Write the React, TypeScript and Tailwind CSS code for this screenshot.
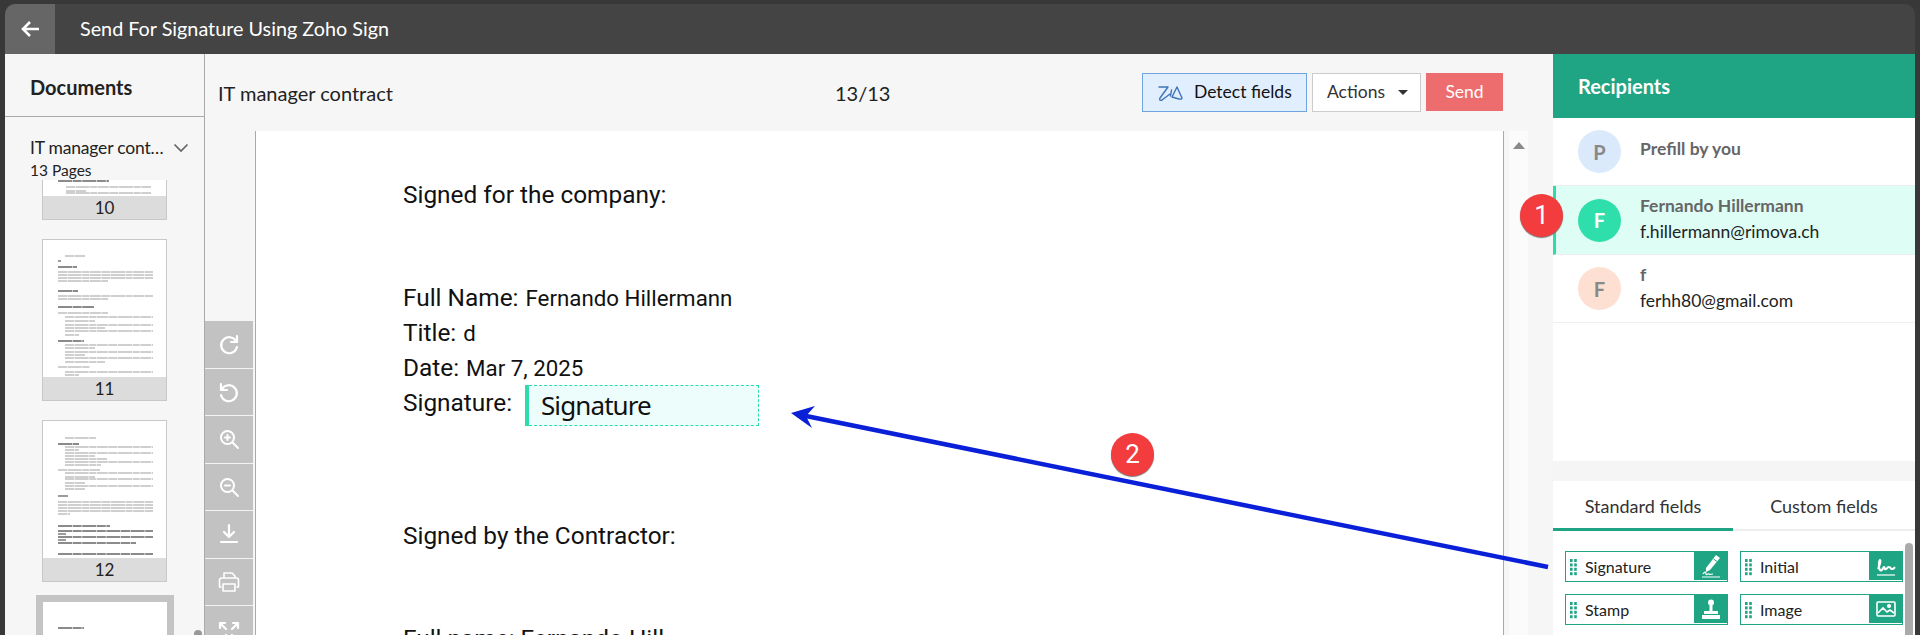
import React from "react";

const lato = "font-['Lato','Noto_Sans',sans-serif]";

type L = [number, number, number, number?];

const thumb10: L[] = [[15, 1, 51, 1], [23, 7, 85], [23, 11, 20], [23, 13, 85]];
const thumb11: L[] = [
  [22, 16, 20], [15, 21, 3, 1], [15, 27, 19, 1],
  [15, 32, 95], [15, 35, 95], [15, 38, 95], [15, 41, 50],
  [15, 51, 20, 1], [15, 56, 95], [15, 59, 50],
  [15, 67, 36, 1], [15, 73, 50],
  [22, 77, 88], [22, 81, 30], [22, 85, 88], [22, 88, 40], [22, 91, 88], [22, 95, 14],
  [15, 101, 26, 1], [22, 105, 88], [22, 108, 30], [22, 112, 88], [22, 115, 20], [22, 118, 88], [22, 122, 40],
  [15, 127, 32], [22, 132, 88], [22, 135, 14], [22, 139, 88],
];
const thumb12: L[] = [
  [22, 17, 31], [15, 23, 21, 1],
  [22, 26, 88], [22, 29, 14], [22, 32, 88], [22, 35, 30], [22, 38, 42], [22, 41, 88], [22, 44, 36],
  [15, 49, 42], [22, 52, 88], [22, 56, 30], [22, 58, 88], [22, 62, 20], [22, 65, 88], [22, 68, 20],
  [15, 75, 10, 1], [15, 81, 95], [15, 84, 95], [15, 87, 95], [15, 90, 95], [15, 93, 12],
  [15, 105, 52, 1], [15, 110, 95, 1], [15, 113, 8, 1], [15, 116, 95, 1], [15, 119, 8, 1], [15, 122, 78, 1],
  [15, 133, 95, 1],
];

function Lines({ lines, h }: { lines: L[]; h: number }) {
  return (
    <svg width="123" height={h} viewBox={`0 0 123 ${h}`} className="block blur-[0.3px]">
      {lines.map(([x, y, w, b], i) => (
        <line
          key={i}
          x1={x}
          x2={x + w}
          y1={y}
          y2={y}
          strokeWidth={b ? 1.3 : 1.2}
          stroke={b ? "#666" : "#a0a0a0"}
          strokeDasharray={b ? "14 0.6 9 0.6" : "9 0.6 14 0.6 7 0.6 11 0.6"}
        />
      ))}
    </svg>
  );
}

function Thumb({ n, lines, h, clip }: { n: string; lines: L[]; h: number; clip?: boolean }) {
  return (
    <div className={`ml-[42px] w-[125px] bg-white border border-[#c8c8c8] ${clip ? "border-t-0" : ""} mb-[19px]`}>
      <Lines lines={lines} h={h} />
      <div className="h-[23px] bg-[#dcdcdc] text-center text-[17px] leading-[24px] text-[#222]">{n}</div>
    </div>
  );
}

function ToolButton({ children }: { children: React.ReactNode }) {
  return (
    <div className="h-[47.5px] flex items-center justify-center text-white bg-[#c2c2c2] border-b border-[#f3f3f3]">
      {children}
    </div>
  );
}

const ic = { width: 24, height: 24, viewBox: "0 0 24 24", fill: "none", stroke: "#fff", strokeWidth: 2.2, strokeLinecap: "round" as const, strokeLinejoin: "round" as const };

function Recipient({ letter, avatar, name, email, active, text }: { letter: string; avatar: string; name: string; email?: string; active?: boolean; text: string }) {
  return (
    <div className={`flex items-center border-b border-[#eeeeee] ${active ? "h-[69px] bg-[#ddfdf5] border-l-[3px] border-l-[#2edbab] pl-[22px]" : "h-[68px] pl-[25px]"}`}>
      <div className={`w-[43px] h-[43px] rounded-full flex items-center justify-center text-[20px] font-bold ${avatar} ${text}`}>{letter}</div>
      <div className={`ml-[19px] ${email ? "-mt-[2px]" : "-mt-[5px]"}`}>
        <div className="text-[17.5px] leading-[26px] font-bold text-[#666666]">{name}</div>
        {email && <div className="text-[17.5px] leading-[26px] text-[#222222]">{email}</div>}
      </div>
    </div>
  );
}

function Grip() {
  return (
    <svg width="7" height="17" viewBox="0 0 7 17" className="shrink-0">
      {[0, 1].map((c) => [0, 1, 2, 3].map((r) => <rect key={`${c}${r}`} x={c * 4.2} y={r * 4.4} width="2.6" height="3" fill="#1fa583" />))}
    </svg>
  );
}

function Field({ label, icon }: { label: string; icon: React.ReactNode }) {
  return (
    <div className="w-[163px] h-[31px] border border-[#1fa583] flex items-start">
      <div className="ml-[4px] mt-[7px]"><Grip /></div>
      <span className="ml-[8px] text-[16px] leading-[30px] text-[#222] flex-1">{label}</span>
      <div className="w-[33px] h-[28px] bg-[#1fa583] flex items-center justify-center">{icon}</div>
    </div>
  );
}

export default function App() {
  return (
    <div className={`relative w-[1920px] h-[635px] overflow-hidden bg-[#383838] pt-[4px] pl-[5px] pr-[5px] ${lato}`}>
      <header className="h-[50px] bg-[#444444] rounded-t-[10px] flex items-center overflow-hidden">
        <div className="w-[50px] h-full bg-[#666666] flex items-center justify-center">
          <svg width="20" height="18" viewBox="0 0 20 18" fill="none" stroke="#fff" strokeWidth="2.6">
            <path d="M19 9H3M10 2 3 9l7 7" />
          </svg>
        </div>
        <div className="ml-[25px] text-white text-[19.8px]">Send For Signature Using Zoho Sign</div>
      </header>

      <div className="flex h-[581px]">
        {/* documents */}
        <aside className="w-[200px] shrink-0 bg-[#f6f6f6] border-r border-[#aaaaaa] flex flex-col relative overflow-hidden">
          <div className="h-[63px] shrink-0 border-b border-[#aaaaaa] pl-[25px] pt-[19px] text-[20px] leading-[28px] font-bold text-[#222]">Documents</div>
          <div className="h-[63px] shrink-0 pl-[25px] pt-[19px] relative text-[#222]">
            <div className="text-[17.500px] leading-[24px] tracking-[-0.2px] whitespace-nowrap">IT manager cont…</div>
            <div className="text-[15.500px] leading-[18px] mt-[1px]">13 Pages</div>
            <svg width="16" height="10" viewBox="0 0 16 10" fill="none" stroke="#666" strokeWidth="1.7" className="absolute left-[168px] top-[26px]">
              <path d="M1.500 1.500l6.500 6.500 6.500-6.500" />
            </svg>
          </div>
          <div className="flex-1 overflow-hidden -ml-[5px]">
            <Thumb n="10" lines={thumb10} h={16} clip />
            <Thumb n="11" lines={thumb11} h={137} />
            <Thumb n="12" lines={thumb12} h={137} />
            <div className="ml-[36px] w-[138px] h-[60px] bg-white border-[7px] border-b-0 border-[#c4c4c4] -mt-[6px]">
              <Lines lines={[[15, 26, 26, 1]]} h={50} />
            </div>
          </div>
          <div className="absolute left-[189px] top-[576px] w-[8px] h-[20px] rounded-full bg-[#999999]" />
        </aside>

        {/* main */}
        <main className="w-[1348px] shrink-0 bg-[#f6f6f6] flex flex-col relative">
          <div className="h-[77px] shrink-0 flex items-start text-[#222] relative">
            <div className="ml-[13px] mt-[25px] text-[20px] leading-[28px] w-[617px]">IT manager contract</div>
            <div className="mt-[25px] text-[20px] leading-[28px] w-[307px]">13/13</div>
            <button className="mt-[19px] w-[165px] h-[39px] bg-[#e1eefd] border border-[#6ea5e0] flex items-center pl-[15px] text-[17.5px] text-[#111]">
              <svg width="26" height="18" viewBox="0 0 26 18" fill="none" stroke="#3f74b5" strokeWidth="1.4" strokeLinecap="round" strokeLinejoin="round">
                <path d="M1 3h9L2 14c-1 2 0 3 2 2l8-6" />
                <path d="M13.500 6l-1 6" />
                <path d="M14 13 19 3l5 11c0 2-4 1-10-1z" />
              </svg>
              <span className="ml-[10px]">Detect fields</span>
            </button>
            <button className="mt-[19px] ml-[5px] w-[109px] h-[39px] bg-white border border-[#cccccc] flex items-center pl-[14px] text-[17.5px] text-[#333]">
              Actions
              <span className="ml-[13px] w-0 h-0 border-x-[5px] border-x-transparent border-t-[5px] border-t-[#333]" />
            </button>
            <button className="mt-[19px] ml-[5px] w-[77px] h-[38px] bg-[#ed6d6e] text-white text-[17.5px]">Send</button>
          </div>

          <div className="flex-1 flex min-h-0 overflow-hidden">
            <div className="w-[48px] shrink-0 flex flex-col justify-end">
              <ToolButton>
                <svg {...ic}><path d="M19 9a8 8 0 1 0 1 6" /><path d="M20 4v6h-6" /></svg>
              </ToolButton>
              <ToolButton>
                <svg {...ic}><path d="M5 9a8 8 0 1 1-1 6" /><path d="M4 4v6h6" /></svg>
              </ToolButton>
              <ToolButton>
                <svg {...ic} strokeWidth={2}><circle cx="10.500" cy="10.500" r="6.500" /><path d="M15.500 15.500 21 21M8 10.500h5M10.500 8v5" /></svg>
              </ToolButton>
              <ToolButton>
                <svg {...ic} strokeWidth={2}><circle cx="10.500" cy="10.500" r="6.500" /><path d="M15.500 15.500 21 21M8 10.500h5" /></svg>
              </ToolButton>
              <ToolButton>
                <svg {...ic}><path d="M12 3v12M7 10l5 5 5-5M4 20h16" /></svg>
              </ToolButton>
              <ToolButton>
                <svg {...ic} strokeWidth={1.6}><path d="M7 8V3h8l3 3v2M4 17H2.500V10a2 2 0 0 1 2-2h15a2 2 0 0 1 2 2v7H20M6 14h12v7H6z" /></svg>
              </ToolButton>
              <div className="h-[29px] shrink-0 bg-[#c2c2c2] flex justify-center pt-[14px] overflow-hidden">
                <svg {...ic} className="shrink-0"><path d="M3 8V3h5M16 3h5v5M3 3l6 6M21 3l-6 6M3 16v5h5M21 16v5h-5M3 21l6-6M21 21l-6-6" /></svg>
              </div>
            </div>
            <div className="w-[2px] shrink-0" />
            <div className="w-[1249px] shrink-0 bg-white border-x border-[#aaaaaa] overflow-hidden relative pl-[147px] text-[#111] font-['Roboto',sans-serif] text-[24.4px]">
              <div className="pt-[50px] leading-[28px]">Signed for the company:</div>
              <div className="mt-[71px] leading-[35px]">
                <div className="h-[35px]">Full Name:<span className="ml-[7px] text-[22.3px]">Fernando Hillermann</span></div>
                <div className="h-[35px]">Title:<span className="ml-[7px] text-[22.3px]">d</span></div>
                <div className="h-[35px]">Date:<span className="ml-[7px] text-[22.3px]">Mar 7, 2025</span></div>
                <div className="flex items-start">
                  <span className="w-[122px] shrink-0">Signature:</span>
                  <div className="w-[234px] h-[41px] flex">
                    <div className="w-[4px] bg-[#2edbab] shrink-0" />
                    <div className="flex-1 bg-[#ecfdfb] border border-l-0 border-dashed border-[#2edbab] flex items-center pl-[12px] text-[26px] tracking-[-0.9px] font-['Noto_Sans',sans-serif] text-[#111]">
                      Signature
                    </div>
                  </div>
                </div>
              </div>
              <div className="mt-[96px] leading-[28px]">Signed by the Contractor:</div>
              <div className="mt-[75px] leading-[28px]">Full name: Fernando Hill</div>
            </div>
            <div className="w-[5px] shrink-0" />
            <div className="w-[19px] shrink-0 bg-[#fbfbfb] pt-[11px] flex justify-center">
              <span className="w-0 h-0 border-x-[6px] border-x-transparent border-b-[7px] border-b-[#8a8a8a]" />
            </div>
          </div>
        </main>

        {/* right */}
        <aside className="w-[362px] shrink-0 flex flex-col bg-[#f5f5f5]">
          <div className="h-[407px] shrink-0 bg-white">
            <div className="h-[64px] bg-[#1fa583] pl-[25px] flex items-center text-white text-[20px] font-bold">Recipients</div>
            <Recipient letter="P" avatar="bg-[#dbe9fc]" text="text-[#888888]" name="Prefill by you" />
            <Recipient letter="F" avatar="bg-[#2edfac]" text="text-white" name="Fernando Hillermann" email="f.hillermann@rimova.ch" active />
            <Recipient letter="F" avatar="bg-[#fde0d2]" text="text-[#888888]" name="f" email="ferhh80@gmail.com" />
          </div>
          <div className="h-[20px] shrink-0" />
          <div className="flex-1 bg-white relative">
            <div className="flex h-[50px] border-b-2 border-[#eeeeee] text-[18px] text-[#333]">
              <div className="w-[180px] h-[50px] border-b-[3px] border-[#1fa583] text-center leading-[50px]">Standard fields</div>
              <div className="w-[182px] text-center leading-[50px]">Custom fields</div>
            </div>
            <div className="grid grid-cols-[163px_163px] gap-x-[12px] gap-y-[12px] pl-[12px] pt-[20px]">
              <Field label="Signature" icon={
                <svg width="20" height="24" viewBox="0 0 20 24" fill="none" stroke="#fff" strokeWidth="1.6">
                  <path d="M15 1l4 3-10 12-4 2 0-4z" fill="#fff" stroke="none" /><path d="M12.500 5l3.500 2.500" stroke="#1fa583" strokeWidth="1" /><path d="M1 23h18M2 20c2-3 3-2 3 0s2-1 3 0 2 0 4 0" strokeWidth="1.2" />
                </svg>
              } />
              <Field label="Initial" icon={
                <svg width="20" height="20" viewBox="0 0 20 20" fill="none" stroke="#fff" strokeWidth="2">
                  <path d="M1 19h18" strokeWidth="1.2" /><path d="M2 13c2-4 3-9 2-9s-2 8 0 10 3-3 4-3 0 3 2 2 1-2 3-2 1 2 3 2 2-1 3-2" />
                </svg>
              } />
              <Field label="Stamp" icon={
                <svg width="18" height="20" viewBox="0 0 18 20" fill="#fff">
                  <circle cx="9" cy="3.500" r="3" /><rect x="7.500" y="6" width="3" height="7" /><rect x="2" y="12" width="14" height="3" /><rect y="16" width="18" height="4" />
                </svg>
              } />
              <Field label="Image" icon={
                <svg width="20" height="16" viewBox="0 0 20 16" fill="none" stroke="#fff" strokeWidth="1.6">
                  <rect x="1" y="1" width="18" height="14" rx="1" /><path d="M2 12l5-5 4 4 3-2 4 3" /><circle cx="13" cy="5" r="1.300" fill="#fff" />
                </svg>
              } />
            </div>
            <div className="absolute left-[352px] top-[62px] w-[8px] h-[120px] rounded-full bg-[#aaaaaa]" />
          </div>
        </aside>
      </div>

      {/* annotations */}
      <svg width="1920" height="635" className="absolute left-0 top-0 pointer-events-none">
        <path d="M1548 567 L806 416" stroke="#0a1fd8" strokeWidth="4.500" />
        <path d="M791 413 L815 406 L806 416 L812 428 Z" fill="#0a1fd8" />
      </svg>
      <div className="absolute left-[1520px] top-[194px] w-[43px] h-[43px] rounded-full bg-[#f23c3e] shadow-[0_1px_1px_#777] flex items-center justify-center text-white text-[26px] font-['Roboto',sans-serif]">1</div>
      <div className="absolute left-[1111px] top-[433px] w-[43px] h-[43px] rounded-full bg-[#f23c3e] shadow-[0_1px_1px_#777] flex items-center justify-center text-white text-[26px] font-['Roboto',sans-serif]">2</div>
    </div>
  );
}
